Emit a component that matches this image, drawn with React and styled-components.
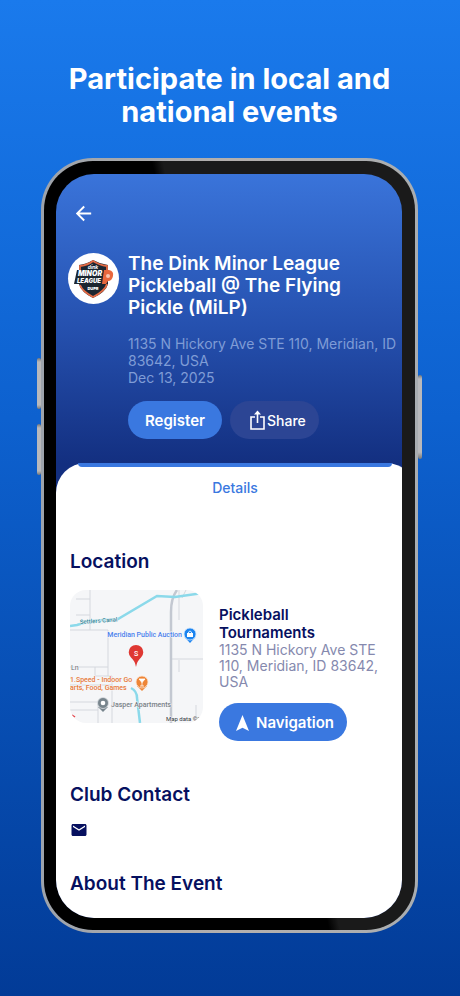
import React from "react";
import { MdArrowBack, MdEmail } from "react-icons/md";
import styled, { createGlobalStyle } from "styled-components";

const primaryColor = "#3a78e0";
const headingColor = "#06105f";
const mutedColor = "#8589ae";

const GlobalStyle = createGlobalStyle`
  * {
    box-sizing: border-box;
  }

  body {
    margin: 0;
    font-family: Inter, "Liberation Sans", sans-serif;
  }

  h1, h2, h3, p, address {
    margin: 0;
    font-style: normal;
  }

  button {
    font-family: inherit;
    border: 0;
    padding: 0;
    cursor: pointer;
  }
`;

const Page = styled.main`
  display: flex;
  flex-direction: column;
  align-items: center;
  gap: 30px;
  min-height: 100vh;
  padding: 62px 42px 62px 41px;
  background: linear-gradient(180deg, #1a7aec 0%, #0d61cf 42%, #023b97 100%);
`;

const Headline = styled.h1`
  max-width: 360px;
  color: #fff;
  font-size: 29px;
  font-weight: 700;
  line-height: 33px;
  text-align: center;
`;

const Phone = styled.div`
  position: relative;
  width: 100%;
  max-width: 480px;
  padding: 3px;
  border-radius: 52px;
  background: linear-gradient(90deg, #9da3ab, #b4b0ae 50%, #a9adb0);
`;

const Bezel = styled.div`
  padding: 13px 13px 12px 12px;
  border-radius: 49px;
  background: linear-gradient(77deg, #000 52%, #1a1a1a 54%);
`;

const SideKey = styled.span`
  position: absolute;
  top: ${({ $top }) => $top}px;
  ${({ $side }) => $side}: -4px;
  width: 4px;
  height: ${({ $height }) => $height}px;
  border-radius: 2px;
  background: linear-gradient(#777 0, #b9b9bb 4px, #b9b9bb 92%, #777 100%);
`;

const Screen = styled.div`
  overflow: hidden;
  border-radius: 38px;
  background: linear-gradient(180deg, #3a74da 0, #2550ae 155px, #132f80 290px);
`;

const Hero = styled.header`
  padding: 28px 4px 24px 12px;
`;

const BackButton = styled.button`
  display: flex;
  margin-left: 4px;
  color: #fff;
  background: none;
`;

const EventRow = styled.div`
  display: grid;
  grid-template-columns: 51px 1fr;
  gap: 9px;
  margin-top: 28px;
`;

const Avatar = styled.div`
  width: 51px;
  height: 51px;
  border-radius: 50%;
  background: #fff;
`;

const EventTitle = styled.h2`
  max-width: 240px;
  color: #fff;
  font-size: 19px;
  font-weight: 600;
  line-height: 22px;
`;

const EventMeta = styled.div`
  margin-top: 16px;
  color: #7f9cd6;
  font-size: 14px;
  line-height: 17px;
`;

const Actions = styled.div`
  display: flex;
  gap: 8px;
  margin-top: 15px;
`;

const PillButton = styled.button`
  display: flex;
  align-items: center;
  justify-content: center;
  gap: ${({ $gap }) => $gap || 0}px;
  height: 38px;
  padding: 0 17px;
  border-radius: 19px;
  color: #fff;
  font-size: 15px;
  font-weight: 600;
  background: ${primaryColor};
`;

const ShareButton = styled(PillButton)`
  padding: 0 13px 0 20px;
  font-size: 14px;
  font-weight: 500;
  background: #2c4594;
`;

const NavigateButton = styled(PillButton)`
  padding: 0 13px 0 17px;
`;

const Sheet = styled.section`
  margin-right: -14px;
  padding: 0 24px 22px 14px;
  border-radius: 30px 30px 0 0;
  background: #fff;
`;

const TabBar = styled.nav`
  margin-left: 8px;
`;

const TabIndicator = styled.div`
  height: 4px;
  border-radius: 0 0 4px 4px;
  background: ${primaryColor};
`;

const Tab = styled.button`
  display: block;
  width: 100%;
  height: 40px;
  color: ${primaryColor};
  font-size: 14px;
  font-weight: 500;
  background: none;
`;

const SectionTitle = styled.h2`
  margin-top: ${({ $top }) => $top}px;
  color: ${headingColor};
  font-size: 19px;
  font-weight: 600;
  line-height: 24px;
`;

const LocationRow = styled.div`
  display: grid;
  grid-template-columns: 133px 1fr;
  gap: 16px;
  margin-top: 16px;
`;

const MapBox = styled.div`
  height: 133px;
  overflow: hidden;
  border-radius: 16px;
  background: #f5f6f8;
`;

const Venue = styled.div`
  display: flex;
  flex-direction: column;
  align-items: flex-start;
  padding-top: 16px;
`;

const VenueName = styled.h3`
  max-width: 140px;
  color: ${headingColor};
  font-size: 15px;
  font-weight: 600;
  line-height: 18px;
`;

const VenueAddress = styled.address`
  max-width: 168px;
  margin-bottom: 13px;
  color: ${mutedColor};
  font-size: 14px;
  line-height: 16px;
`;

const MailLink = styled.a`
  display: flex;
  width: 18px;
  margin-top: 14px;
  color: ${headingColor};
`;

function LeagueLogo() {
  return (
    <svg width="51" height="51" viewBox="0 0 51 51" aria-hidden="true">
      <path
        d="M11 12Q19 11 25 7Q32 11 40 12V31Q38 39 25 45Q13 39 11 31Z"
        fill="#1c2630"
      />
      <path
        d="M12 17V13Q20 12 25 8Q31 12 39 13V17M12 32Q14 38 25 44Q37 38 39 31"
        fill="none"
        stroke="#e46b45"
        strokeWidth="1.8"
      />
      <path d="M9 17H36V31H6Z" fill="#1c2630" />
      <path d="M36 17H41Q46 18 45 23Q44 28 40 28L38 31H34Z" fill="#e8683e" />
      <circle cx="40" cy="23" r="2" fill="#f7c6b2" />
      <g
        fill="#fff"
        fontFamily="Inter, sans-serif"
        fontWeight="900"
        fontStyle="italic"
        textAnchor="middle"
      >
        <text x="25" y="16" fontSize="5" fontWeight="700">dink</text>
        <text x="22" y="23" fontSize="7">MINOR</text>
        <text x="21" y="30" fontSize="6">LEAGUE</text>
        <text x="25" y="37" fontSize="4" fontStyle="normal">DUPR</text>
      </g>
    </svg>
  );
}

function ShareIcon() {
  return (
    <svg width="15" height="20" viewBox="0 0 15 20" fill="none" aria-hidden="true">
      <path d="M5 7H1V19H14V7H10" stroke="#fff" strokeWidth="1.6" />
      <path d="M7.5 13V3" stroke="#fff" strokeWidth="1.6" />
      <path d="M7.5 .5L11 4.5H4Z" fill="#fff" />
    </svg>
  );
}

function NavigationIcon() {
  return (
    <svg width="13" height="17" viewBox="0 0 13 17" aria-hidden="true">
      <path d="M6.5 1L13 17L6.5 13.8L0 17Z" fill="#fff" />
    </svg>
  );
}

function MapPreview() {
  return (
    <svg width="133" height="133" viewBox="0 0 133 133" role="img" aria-label="Map">
      <g fill="none" stroke="#d5d8de" strokeWidth="1">
        <path d="M20 0V40M6 9H20M6 25H20M0 40H38V86M0 77H38M25 77V86H42V133M0 112H28V133M0 120H28M0 95H42" />
        <path d="M101 69H133M109 0V30M109 70V82M126 115V133M116 0L112 8" />
      </g>
      <path
        d="M107 0Q101 8 101 22V133"
        fill="none"
        stroke="#c3c8d1"
        strokeWidth="2.5"
      />
      <g fill="none" stroke="#8bd9ea" strokeWidth="2.5">
        <path d="M0 36L7 35L20 31L48 29L87 6L105 7L133 3" />
        <path d="M61 98Q67 101 67 108L70 133" />
      </g>
      <g fontFamily="Roboto, sans-serif" fontSize="7" fontWeight="500">
        <g stroke="#f5f6f8" strokeWidth="1" paintOrder="stroke">
          <text x="10" y="34" fontSize="6" fill="#31889c" transform="rotate(-4 10 34)">
            Settlers Canal
          </text>
          <text x="112" y="47" fill="#4a80ed" textAnchor="end">
            Meridian Public Auction
          </text>
          <text x="1" y="80" fontWeight="400" fill="#6b7078">Ln</text>
          <text x="0" y="92" fill="#e8793a">1.Speed - Indoor Go</text>
          <text x="0" y="100" fill="#e8793a">arts, Food, Games</text>
          <text x="41" y="117" fill="#7a8187">Jasper Apartments</text>
          <text x="96" y="131" fontSize="6" fontWeight="400" fill="#33373d">Map data ©2</text>
        </g>
        <path d="M114.5 47L120 53L125.5 47Z" fill="#1c84f0" />
        <circle cx="120" cy="44" r="6" fill="#1c84f0" stroke="#cfe4fb" strokeWidth=".8" />
        <path d="M117 43H123V47H117Z" fill="#fff" />
        <path d="M118.5 43V42Q120 40 121.5 42V43" fill="none" stroke="#fff" strokeWidth=".8" />
        <path
          d="M66 77Q65 71 61 67.5A7.3 7.3 0 1 1 71 67.5Q67 71 66 77Z"
          fill="#df3833"
        />
        <text x="66" y="66" fill="#fff" textAnchor="middle">S</text>
        <path d="M67 96L72 101L77 96Z" fill="#ee8536" />
        <circle cx="72" cy="92" r="6" fill="#ee8536" stroke="#fbe2cf" strokeWidth=".8" />
        <path d="M69 89H75L72 92.5ZM72 92V96M70 96H74" fill="#fff" stroke="#fff" strokeWidth=".8" />
        <path d="M28 117L33 122L38 117Z" fill="#78858d" />
        <circle cx="33" cy="113" r="5.5" fill="#78858d" stroke="#dde1e4" strokeWidth=".8" />
        <circle cx="33" cy="113" r="2.3" fill="#fff" />
        <path d="M2 125L5 127" stroke="#e5484d" strokeWidth="1.5" />
      </g>
    </svg>
  );
}

export default function App() {
  return (
    <>
      <GlobalStyle />
      <Page>
        <Headline>Participate in local and national events</Headline>

        <Phone>
          <SideKey $side="left" $top={200} $height={51} />
          <SideKey $side="left" $top={266} $height={51} />
          <SideKey $side="right" $top={217} $height={84} />
          <Bezel>
            <Screen>
              <Hero>
                <BackButton aria-label="Back">
                  <MdArrowBack size={23} />
                </BackButton>
                <EventRow>
                  <Avatar>
                    <LeagueLogo />
                  </Avatar>
                  <div>
                    <EventTitle>
                      The Dink Minor League Pickleball @ The Flying Pickle (MiLP)
                    </EventTitle>
                    <EventMeta>
                      <address>1135 N Hickory Ave STE 110, Meridian, ID 83642, USA</address>
                      <p>Dec 13, 2025</p>
                    </EventMeta>
                    <Actions>
                      <PillButton>Register</PillButton>
                      <ShareButton $gap={2}>
                        <ShareIcon />
                        Share
                      </ShareButton>
                    </Actions>
                  </div>
                </EventRow>
              </Hero>

              <Sheet>
                <TabBar>
                  <TabIndicator />
                  <Tab>Details</Tab>
                </TabBar>

                <SectionTitle $top={43}>Location</SectionTitle>
                <LocationRow>
                  <MapBox>
                    <MapPreview />
                  </MapBox>
                  <Venue>
                    <VenueName>Pickleball Tournaments</VenueName>
                    <VenueAddress>
                      1135 N Hickory Ave STE 110, Meridian, ID 83642, USA
                    </VenueAddress>
                    <NavigateButton $gap={7}>
                      <NavigationIcon />
                      Navigation
                    </NavigateButton>
                  </Venue>
                </LocationRow>

                <SectionTitle $top={42}>Club Contact</SectionTitle>
                <MailLink href="#contact" aria-label="Email the club">
                  <MdEmail size={18} />
                </MailLink>

                <SectionTitle $top={33}>About The Event</SectionTitle>
              </Sheet>
            </Screen>
          </Bezel>
        </Phone>
      </Page>
    </>
  );
}
